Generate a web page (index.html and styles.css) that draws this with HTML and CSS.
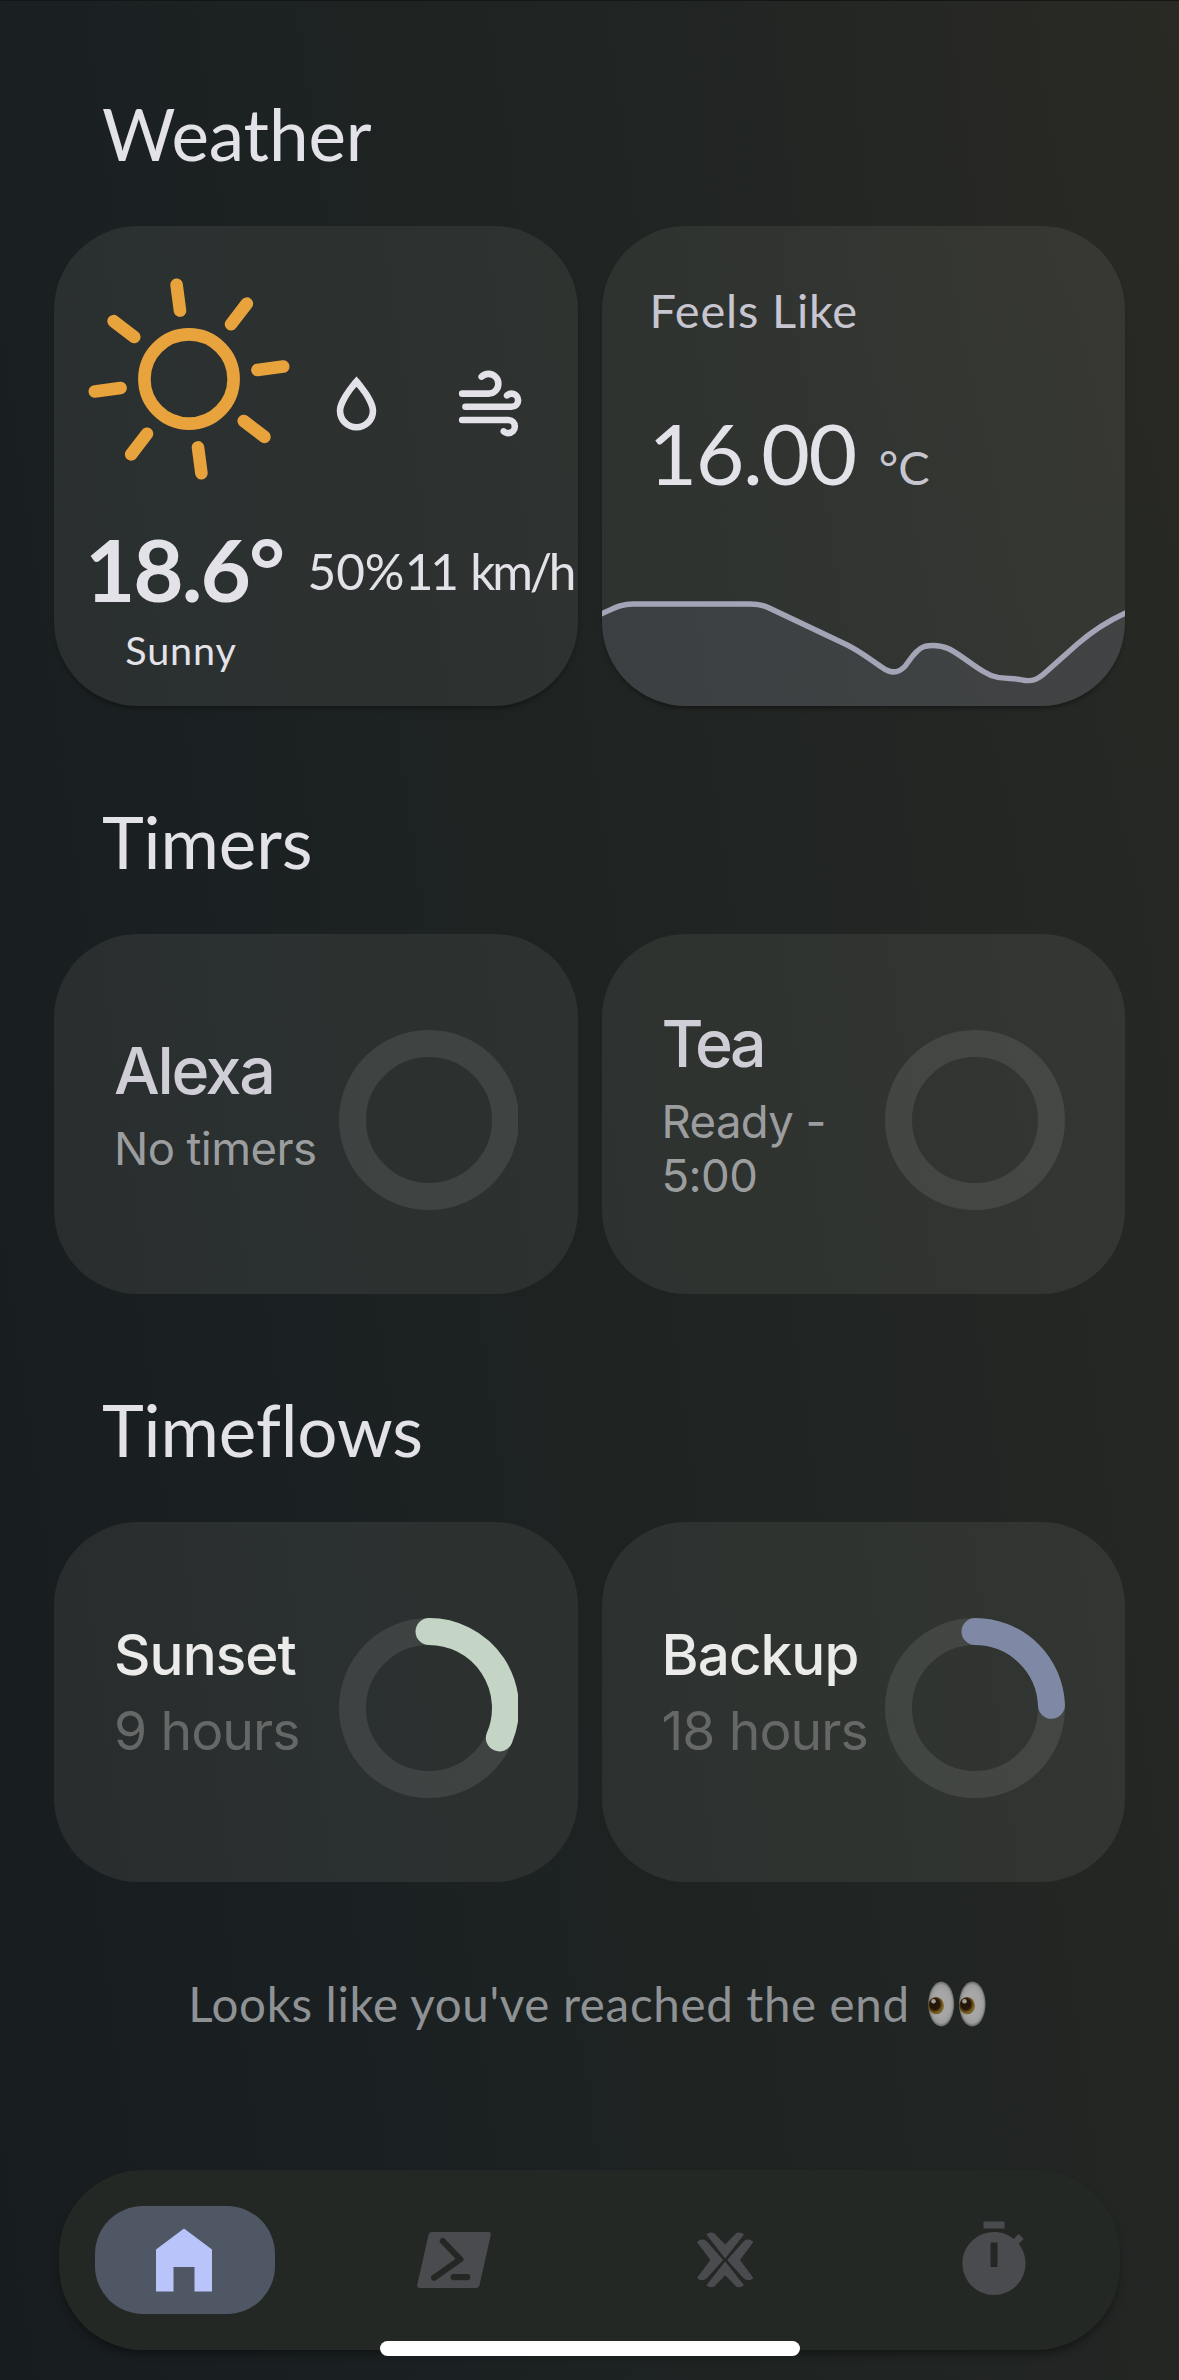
FILE: index.html
```html
<!DOCTYPE html>
<html lang="en">
<head>
<meta charset="utf-8">
<title>Home dashboard</title>
<link rel="stylesheet" href="styles.css">
</head>
<body>
<main class="dashboard">
  <section class="section weather">
    <h2 class="heading">Weather</h2>
    <div class="cards">
      <article class="card tall conditions">
        <div class="column now">
          <svg class="sun" width="204" height="204" viewBox="-102 -102 204 204" fill="none" stroke="#e8a33c" stroke-width="12.6" stroke-linecap="round" aria-label="Sunny">
            <circle r="44.6"/>
            <g transform="rotate(-7.5)">
              <path d="M0-69V-95M0 69V95M69 0H95M-69 0H-95"/>
              <path d="M0-69V-95M0 69V95M69 0H95M-69 0H-95" transform="rotate(45)"/>
            </g>
          </svg>
          <strong class="temperature">18.6°</strong>
          <span class="state">Sunny</span>
        </div>
        <div class="column humidity">
          <svg class="metric-icon" viewBox="0 0 24 24"><path d="M12,3.77L11.25,4.61C11.25,4.61 9.97,6.06 8.68,7.94C7.39,9.82 6,12.07 6,14.23A6,6 0 0,0 12,20.23A6,6 0 0,0 18,14.23C18,12.07 16.61,9.82 15.32,7.94C14.03,6.06 12.75,4.61 12.75,4.61L12,3.77M12,6.9C12.44,7.42 12.84,7.85 13.68,9.07C14.89,10.83 16,13.07 16,14.23C16,16.45 14.22,18.23 12,18.23C9.78,18.23 8,16.45 8,14.23C8,13.07 9.11,10.83 10.32,9.07C11.16,7.85 11.56,7.42 12,6.9Z"/></svg>
          <span class="metric">50%</span>
        </div>
        <div class="column wind">
          <svg class="metric-icon" viewBox="0 0 24 24"><path d="M4,10A1,1 0 0,1 3,9A1,1 0 0,1 4,8H12A2,2 0 0,0 14,6A2,2 0 0,0 12,4C11.45,4 10.95,4.22 10.59,4.59C10.2,5 9.56,5 9.17,4.59C8.78,4.2 8.78,3.56 9.17,3.17C9.9,2.45 10.9,2 12,2A4,4 0 0,1 16,6A4,4 0 0,1 12,10H4M19,12A1,1 0 0,0 20,11A1,1 0 0,0 19,10C18.72,10 18.47,10.11 18.29,10.29C17.9,10.68 17.27,10.68 16.88,10.29C16.5,9.9 16.5,9.27 16.88,8.88C17.42,8.34 18.17,8 19,8A3,3 0 0,1 22,11A3,3 0 0,1 19,14H5A1,1 0 0,1 4,13A1,1 0 0,1 5,12H19M18,18H4A1,1 0 0,1 3,17A1,1 0 0,1 4,16H18A3,3 0 0,1 21,19A3,3 0 0,1 18,22C17.17,22 16.42,21.66 15.88,21.12C15.5,20.73 15.5,20.1 15.88,19.71C16.27,19.32 16.9,19.32 17.29,19.71C17.47,19.89 17.72,20 18,20A1,1 0 0,0 19,19A1,1 0 0,0 18,18Z"/></svg>
          <span class="metric metric-speed">11 km/h</span>
        </div>
      </article>
      <article class="card tall feels">
        <span class="feels-label">Feels Like</span>
        <div class="feels-reading"><span class="feels-value">16.00</span><span class="feels-unit">°C</span></div>
        <svg class="graph" viewBox="0 368 523 112" preserveAspectRatio="none">
          <path fill="#8085a0" fill-opacity=".17" d="M0 387.500C11 383 18 378 31 378H148C156 378 161 379 167 382L245 419C259 426 270 435 280 441.500C288 447.500 296 447.500 303 440C309 432 314 423 322 420.500C331 418.500 340 420 347 423C360 430 371 440 382 446C395 454.500 408 451 420 454C430 456 436 453 443 446.500L475 418C491 404 504 395.500 524 386.500V480H0Z"/>
          <path fill="none" stroke="#a3a5b6" stroke-width="5.4" d="M-1 388C11 383 18 378 31 378H148C156 378 161 379 167 382L245 419C259 426 270 435 280 441.500C288 447.500 296 447.500 303 440C309 432 314 423 322 420.500C331 418.500 340 420 347 423C360 430 371 440 382 446C395 454.500 408 451 420 454C430 456 436 453 443 446.500L475 418C491 404 504 395.500 524 386.500"/>
        </svg>
      </article>
    </div>
  </section>

  <section class="section timers">
    <h2 class="heading">Timers</h2>
    <div class="cards">
      <article class="card dial">
        <div class="copy copy-timer">
          <span class="name name-timer">Alexa</span>
          <span class="detail">No timers</span>
        </div>
        <svg class="ring" viewBox="0 0 179 180"><circle class="track" cx="90" cy="90" r="76.5"/></svg>
      </article>
      <article class="card dial">
        <div class="copy copy-timer">
          <span class="name name-timer name-tea">Tea</span>
          <span class="detail">Ready -<br>5:00</span>
        </div>
        <svg class="ring" viewBox="0 0 180 180"><circle class="track" cx="90" cy="90" r="76.5"/></svg>
      </article>
    </div>
  </section>

  <section class="section timeflows">
    <h2 class="heading">Timeflows</h2>
    <div class="cards">
      <article class="card dial">
        <div class="copy copy-flow">
          <span class="name name-flow">Sunset</span>
          <span class="remaining">9 hours</span>
        </div>
        <svg class="ring" viewBox="0 0 179 180"><circle class="track" cx="90" cy="90" r="76.5"/><path class="progress progress-sunset" d="M90 13.500A76.500 76.500 0 0 1 160.400 119.900"/></svg>
      </article>
      <article class="card dial">
        <div class="copy copy-flow">
          <span class="name name-flow">Backup</span>
          <span class="remaining">18 hours</span>
        </div>
        <svg class="ring" viewBox="0 0 180 180"><circle class="track" cx="90" cy="90" r="76.5"/><path class="progress progress-backup" d="M90 13.500A76.500 76.500 0 0 1 166.450 87.300"/></svg>
      </article>
    </div>
  </section>

  <p class="end">
    <span class="end-text">Looks like you've reached the end</span>
    <svg class="eyes" width="58" height="46" viewBox="0 0 58 46" aria-label="eyes">
      <defs>
        <radialGradient id="white"><stop offset=".6" stop-color="#a5a6a5"/><stop offset=".85" stop-color="#9a9b9a"/><stop offset="1" stop-color="#616462"/></radialGradient>
        <radialGradient id="iris" cx=".42" cy=".42" r=".62"><stop offset=".5" stop-color="#241709"/><stop offset=".62" stop-color="#4b3411"/><stop offset=".85" stop-color="#826a20"/><stop offset="1" stop-color="#5d4b1a"/></radialGradient>
      </defs>
      <ellipse cx="13.200" cy="23" rx="13" ry="22.500" fill="url(#white)"/>
      <ellipse cx="44.300" cy="23" rx="13.300" ry="22.500" fill="url(#white)"/>
      <ellipse cx="8" cy="24.600" rx="7.800" ry="8.600" fill="url(#iris)"/>
      <ellipse cx="39" cy="24.600" rx="7.800" ry="8.600" fill="url(#iris)"/>
      <circle cx="5.500" cy="20.300" r="2.300" fill="#a39f98"/>
      <circle cx="36.500" cy="20.300" r="2.300" fill="#a39f98"/>
    </svg>
  </p>

  <nav class="navbar">
    <a class="tab tab-active tab-near"><svg class="tab-icon" viewBox="0 0 24 24"><path d="M4 21V9l8-6 8 6v12h-5v-7H9v7z"/></svg></a>
    <a class="tab tab-near"><svg class="tab-icon" viewBox="0 0 24 24"><path d="M5.700 4H21.800Q22.650 4 22.500 4.900L19.300 19.100Q19.100 20 18.250 20H2.200Q1.350 20 1.500 19.100L4.700 4.900Q4.900 4 5.700 4Z"/><path class="prompt" d="M8.800 6.600L13.800 11.800L6.300 17.050M11.900 16.900H15.800"/></svg></a>
    <a class="tab tab-far"><svg class="tab-icon" viewBox="0 0 84 84">
      <path d="M23.400 16.500Q27 13.500 31.300 15.200L42.200 26.500L53.100 15.200Q57.400 13.500 61 16.500L42.200 40.500Z"/>
      <path d="M23.400 67.300Q27 70.300 31.300 68.600L42.200 57.300L53.100 68.600Q57.400 70.300 61 67.300L42.200 43.500Z"/>
      <path d="M14 24Q18.500 19.800 23.400 23L40.200 42L23.400 60.800Q18.500 64 14 60L27.400 42Z"/>
      <path d="M70.400 24Q65.900 19.800 61 23L44.200 42L61 60.800Q65.900 64 70.400 60L57 42Z"/>
    </svg></a>
    <a class="tab"><svg class="tab-icon" viewBox="0 0 24 24"><path fill-rule="evenodd" d="M15 1H9v2h6V1zM19.030 7.390l1.420-1.420c-.43-.51-.9-.99-1.410-1.410l-1.420 1.420C16.070 4.740 14.120 4 12 4c-4.970 0-9 4.030-9 9s4.020 9 9 9 9-4.030 9-9c0-2.120-.74-4.070-1.970-5.610zM13 14h-2V7h2v7z"/></svg></a>
  </nav>
</main>
<div class="home-indicator"></div>
</body>
</html>
```
FILE: styles.css
```css
* { box-sizing: border-box; }

body {
  margin: 0;
  color: #e3e2e8;
  font-family: Lato, "Open Sans", sans-serif;
  font-variant-ligatures: none;
  background:
    radial-gradient(ellipse 420px 900px at 100% 0, rgba(54, 44, 36, .25), transparent),
    linear-gradient(82deg, #171c1f 0%, #1b2122 30%, #202422 60%, #242724 85%, #262924 100%);
}

.dashboard {
  display: flex;
  flex-direction: column;
  height: 2380px;
  padding: 0 54px;
  border-top: 1px solid #121615;
}

.heading {
  margin: 0;
  padding-left: 48px;
  height: 90px;
  font-size: 71px;
  line-height: 91px;
  font-weight: 400;
  letter-spacing: -.1px;
}

.section { display: flex; flex-direction: column; gap: 48px; padding-top: 90px; }
.weather { padding-top: 87px; }

.cards {
  display: grid;
  grid-template-columns: 1fr 1fr;
  gap: 24px;
}

.card {
  display: flex;
  height: 360px;
  border-radius: 84px;
  background: rgba(255, 248, 246, .07);
  overflow: hidden;
}

.tall {
  height: 480px;
  box-shadow: 0 4px 5px -2px rgba(0, 0, 0, .4);
}

.conditions { padding-left: 34px; align-items: flex-start; }
.column { display: flex; flex-direction: column; align-items: center; white-space: nowrap; }
.now { width: 198px; padding-top: 51px; margin-right: 21px; }
.sun { flex: none; margin-left: 4px; }
.temperature { margin-top: 38px; margin-right: 6px; height: 100px; font-size: 87px; line-height: 100px; font-weight: 700; letter-spacing: -2px; }
.state { margin-top: 7px; margin-right: 12px; font-size: 39.5px; line-height: 48px; letter-spacing: .9px; }
.humidity { width: 98px; padding-top: 138px; }
.wind { width: 166px; padding-top: 138px; }
.metric-icon { width: 79px; height: 79px; flex: none; fill: #e3e2e8; }
.metric { margin-top: 98px; font-size: 49.5px; line-height: 60px; }
.metric-speed { letter-spacing: -3.2px; word-spacing: 5px; margin-left: 2px; }

.feels { flex-direction: column; padding: 56px 0 0; }
.feels-label { padding-left: 48px; font-size: 47px; line-height: 56px; letter-spacing: .8px; color: #c7c6d0; }
.feels-reading { display: flex; align-items: baseline; gap: 23px; padding-left: 47px; margin-top: 65px; height: 100px; line-height: 100px; }
.feels-value { font-size: 84px; letter-spacing: -1.5px; }
.feels-unit { font-size: 47px; color: #c7c6d0; }
.graph { display: block; width: 100%; height: 112px; margin-top: auto; }

.dial {
  align-items: center;
  justify-content: space-between;
  padding: 12px 60px 0 60px;
  font-family: Inter, "Liberation Sans", sans-serif;
}
.copy { display: flex; flex-direction: column; white-space: nowrap; }
.copy-timer { padding-bottom: 32px; gap: 12px; }
.copy-flow { padding-bottom: 28px; gap: 2px; }
.name-timer { font-size: 64.5px; line-height: 78px; font-weight: 500; letter-spacing: -2.3px; color: #cfced6; }
.name-tea { letter-spacing: -3.6px; }
.detail { font-size: 45.5px; line-height: 54px; letter-spacing: -.6px; color: #9c9d9f; }
.name-flow { font-size: 56.5px; line-height: 72px; font-weight: 500; letter-spacing: -.9px; color: #ebebea; }
.remaining { font-size: 53.5px; line-height: 76px; letter-spacing: -.9px; color: #666867; }
.ring { flex: none; height: 180px; }
.track { fill: none; stroke: rgba(255, 255, 255, .09); stroke-width: 27; }
.progress { fill: none; stroke-width: 27; stroke-linecap: round; }
.progress-sunset { stroke: #c4d5c6; }
.progress-backup { stroke: #7f88a5; }

.end {
  display: flex;
  align-items: center;
  justify-content: center;
  gap: 18px;
  margin: 92px 0 0;
  padding-right: 5px;
  height: 60px;
  font-size: 47.5px;
  line-height: 60px;
  letter-spacing: .66px;
  color: #8f9294;
}
.end-text { white-space: nowrap; }

.navbar {
  display: flex;
  align-items: center;
  justify-content: space-between;
  flex: none;
  height: 180px;
  margin: 136px 5px 0;
  padding: 0 36px;
  border-radius: 84px;
  background: #242825;
  box-shadow: 0 6px 9px -2px rgba(0, 0, 0, .4);
}
.tab {
  display: flex;
  align-items: center;
  justify-content: center;
  width: 180px;
  height: 108px;
  border-radius: 48px;
}
.tab-near { padding-right: 2px; }
.tab-far { padding-left: 2px; }
.tab-active { background: #505764; }
.tab-icon { width: 84px; height: 84px; fill: #4a4b4e; }
.tab-active .tab-icon { fill: #b8c4fa; }
.prompt { fill: none; stroke: #242825; stroke-width: 1.75; stroke-linecap: round; stroke-linejoin: round; }

/* System gesture bar, drawn over the navigation */
.home-indicator {
  position: absolute;
  top: 2341px;
  left: 380px;
  width: 420px;
  height: 15px;
  border-radius: 8px;
  background: #fff;
}
```
